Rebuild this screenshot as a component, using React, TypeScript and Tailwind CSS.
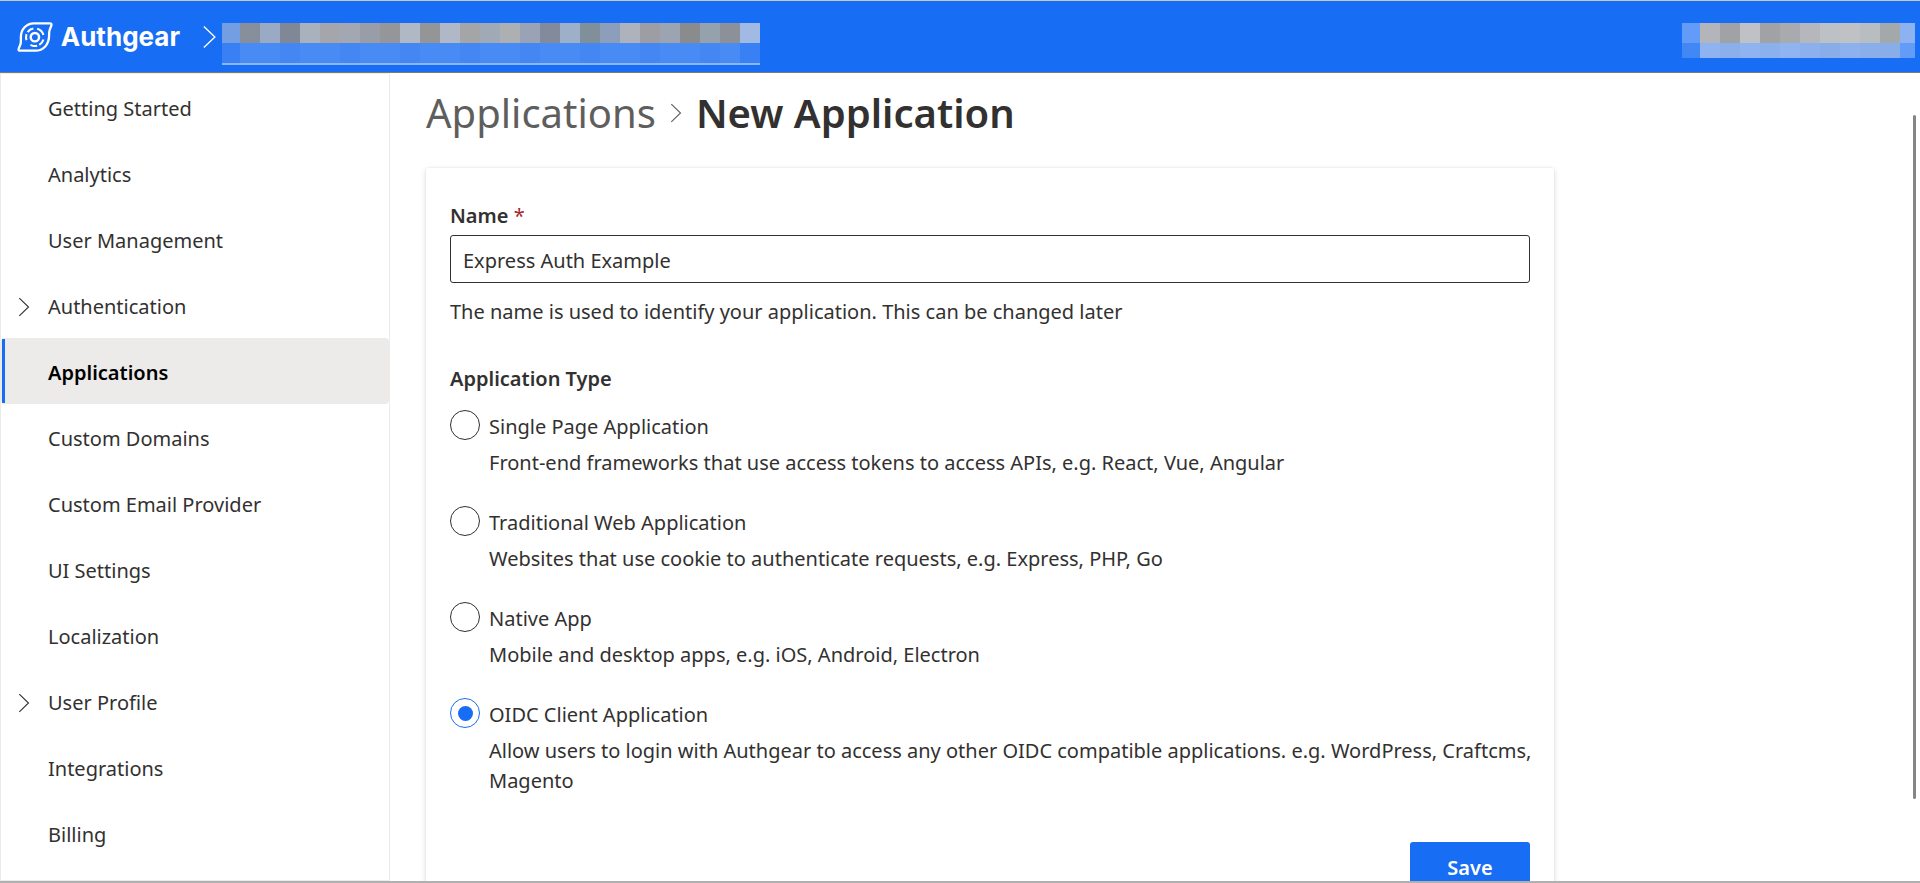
import { useState } from "react";

type NavItem = { label: string; expandable?: boolean; active?: boolean };

const NAV: NavItem[] = [
  { label: "Getting Started" },
  { label: "Analytics" },
  { label: "User Management" },
  { label: "Authentication", expandable: true },
  { label: "Applications", active: true },
  { label: "Custom Domains" },
  { label: "Custom Email Provider" },
  { label: "UI Settings" },
  { label: "Localization" },
  { label: "User Profile", expandable: true },
  { label: "Integrations" },
  { label: "Billing" },
];

const TYPES = [
  {
    id: "spa",
    label: "Single Page Application",
    hint: "Front-end frameworks that use access tokens to access APIs, e.g. React, Vue, Angular",
  },
  {
    id: "traditional",
    label: "Traditional Web Application",
    hint: "Websites that use cookie to authenticate requests, e.g. Express, PHP, Go",
  },
  {
    id: "native",
    label: "Native App",
    hint: "Mobile and desktop apps, e.g. iOS, Android, Electron",
  },
  {
    id: "oidc",
    label: "OIDC Client Application",
    hint: "Allow users to login with Authgear to access any other OIDC compatible applications. e.g. WordPress, Craftcms, Magento",
  },
];

const PROJECT_TOP = [
  "#739ee2", "#868f9b", "#9aaac5", "#808797", "#a9b1bc", "#a4a6ab", "#a3a7b1", "#989da8", "#959699",
  "#b1b8c5", "#939597", "#b0b8c8", "#a3a5a6", "#a0a9b6", "#adb0b3", "#99a3b5", "#838a9b", "#9dafc9",
  "#818f9b", "#8c9eb9", "#adb2bc", "#9c9ea3", "#9ca3b1", "#898b8c", "#96a1ae", "#8c9099", "#a1bae3",
];
const PROJECT_BOTTOM = PROJECT_TOP.map((_, i) =>
  i === 0 || i === PROJECT_TOP.length - 1 ? "#3a80f5" : i % 3 === 0 ? "#4587f2" : "#498bf4",
);
const ACCOUNT_TOP = [
  "#639bf9", "#b3b5ba", "#a0a2a6", "#bfc1c6", "#a0a2a5", "#a8aaae", "#b5b7bc", "#bbc1c4", "#bfc1c5",
  "#b7bdc0", "#a3a8aa", "#8cb2f1",
];
const ACCOUNT_BOTTOM = [
  "#4188f4", "#8fb3f0", "#8bafeb", "#8fb3f0", "#8bb0ee", "#8fb4f1", "#8cb0ed", "#89ade9", "#8db1ee",
  "#8aaeea", "#89ade9", "#639bf9",
];

function Cells({ colors, tall }: { colors: string[]; tall: boolean }) {
  return (
    <div className={tall ? "flex h-5" : "flex h-[15px]"}>
      {colors.map((c, i) => (
        <span key={i} className="w-5 shrink-0 first:w-[18px]" style={{ backgroundColor: c }} />
      ))}
    </div>
  );
}

function Chevron({ className }: { className: string }) {
  return (
    <svg viewBox="0 0 12 20" fill="none" stroke="currentColor" strokeWidth="1.1" className={className} aria-hidden="true">
      <path d="M1.300 1.200 10.500 10 1.300 18.800" />
    </svg>
  );
}

function LogoMark() {
  return (
    <svg viewBox="0 0 36 32" fill="none" stroke="#fff" className="h-8 w-9" aria-hidden="true">
      <path
        strokeWidth="2.300"
        strokeLinejoin="round"
        d="M17 2.200H33Q35.300 2.200 34.600 4.400L33 8.600Q32.300 10.500 32.300 13V14.500C32.300 23.500 26.500 29.800 18.500 29.800H3.300Q1 29.800 1.700 27.700L3.400 23.600Q4 21.800 3.900 19.500V16C3.900 8 9.500 2.200 17 2.200Z"
      />
      <circle cx="18" cy="16.200" r="4.200" strokeWidth="2.500" />
      <circle
        cx="18"
        cy="16.200"
        r="8.900"
        strokeWidth="2.100"
        pathLength="360"
        strokeDasharray="45 15 45 40 40 15 45 25 60 30"
        transform="rotate(15 18 16.200)"
      />
    </svg>
  );
}

export default function App() {
  const [name, setName] = useState("Express Auth Example");
  const [type, setType] = useState("oidc");

  return (
    <div className="flex h-screen flex-col overflow-hidden border-t border-b-2 border-t-[#c8c8c8] border-b-[#b0b0b0] bg-white font-['Noto_Sans','Open_Sans',sans-serif] text-[20px] leading-[30px] text-[#323130]">
      <header className="flex h-[72px] shrink-0 items-start border-b border-[#7a7a7a] bg-[#176df3] pr-[5px] pl-[17px] text-white">
        <a href="#home" className="flex w-[163px] items-center gap-2 pt-5">
          <LogoMark />
          <span className="font-['Inter',sans-serif] text-[26px] leading-8 font-bold">Authgear</span>
        </a>
        <Chevron className="mt-6 mr-[5px] ml-[22px] h-6 w-[15px]" />
        <div className="mt-[22px] border-b-2 border-[#8db6f9]">
          <Cells colors={PROJECT_TOP} tall />
          <Cells colors={PROJECT_BOTTOM} tall />
        </div>
        <div className="mt-[22px] ml-auto w-[233px] overflow-hidden">
          <Cells colors={ACCOUNT_TOP} tall />
          <Cells colors={ACCOUNT_BOTTOM} tall={false} />
        </div>
      </header>

      <div className="flex min-h-0 flex-1">
        <nav className="w-[390px] shrink-0 overflow-hidden border border-[#edebe9]">
          <ul>
            {NAV.map((item) => (
              <li key={item.label}>
                <a
                  href="#nav"
                  aria-current={item.active ? "page" : undefined}
                  className={
                    item.active
                      ? "relative flex h-[66px] items-center rounded-sm bg-[#edebe9] pt-1 pl-[47px] font-semibold text-black"
                      : "relative flex h-[66px] items-center pt-1 pl-[47px]"
                  }
                >
                  {item.active && <span className="absolute inset-y-px left-px w-[3px] bg-[#176df3]" />}
                  {item.expandable && <Chevron className="absolute left-[17px] h-5 w-3" />}
                  {item.label}
                </a>
              </li>
            ))}
          </ul>
        </nav>

        <main className="relative min-w-0 flex-1 overflow-hidden pt-3 pl-9">
          <h1 className="flex items-center text-[40px] leading-[56px]">
            <a href="#applications" className="text-[#605e5c]">
              Applications
            </a>
            <Chevron className="mx-[14px] h-5 w-3 text-[#605e5c]" />
            <span className="font-semibold">New Application</span>
          </h1>

          <form
            className="mt-[27px] w-full max-w-[1128px] rounded-xs px-6 pt-8 pb-8 shadow-[0_2px_6px_rgba(0,0,0,0.13),0_0_2px_rgba(0,0,0,0.11)]"
            onSubmit={(e) => e.preventDefault()}
          >
            <label htmlFor="app-name" className="block pt-px pb-1 font-semibold">
              Name <span className="font-normal text-[#a4262c]">*</span>
            </label>
            <input
              id="app-name"
              value={name}
              onChange={(e) => setName(e.target.value)}
              className="block h-12 w-full rounded-[3px] border border-[#323130] px-3 pt-0.5 outline-none"
            />
            <p className="mt-3.5">The name is used to identify your application. This can be changed later</p>

            <fieldset className="mt-[37px]">
              <legend className="mb-4 font-semibold">Application Type</legend>
              <div className="flex flex-col gap-7">
                {TYPES.map((t) => (
                  <div key={t.id} className="flex flex-col gap-1.5">
                    <div className="flex items-start gap-[9px]">
                      <input
                        type="radio"
                        id={t.id}
                        name="app-type"
                        checked={type === t.id}
                        onChange={() => setType(t.id)}
                        className="grid size-[30px] shrink-0 appearance-none place-items-center rounded-full border border-[#323130] before:size-[15px] before:rounded-full checked:border-[#176df3] checked:before:bg-[#176df3]"
                      />
                      <label htmlFor={t.id} className="pt-0.5">
                        {t.label}
                      </label>
                    </div>
                    <p className="-mr-4 pl-[39px]">{t.hint}</p>
                  </div>
                ))}
              </div>
            </fieldset>

            <div className="mt-[46px] flex justify-end">
              <button
                type="submit"
                className="flex h-12 w-[120px] items-center justify-center rounded-[3px] bg-[#176df3] pt-1 font-semibold text-white"
              >
                Save
              </button>
            </div>
          </form>

          <div className="absolute top-[42px] right-1 h-[684px] w-[3px] rounded-full bg-[#858585]" />
        </main>
      </div>
    </div>
  );
}
